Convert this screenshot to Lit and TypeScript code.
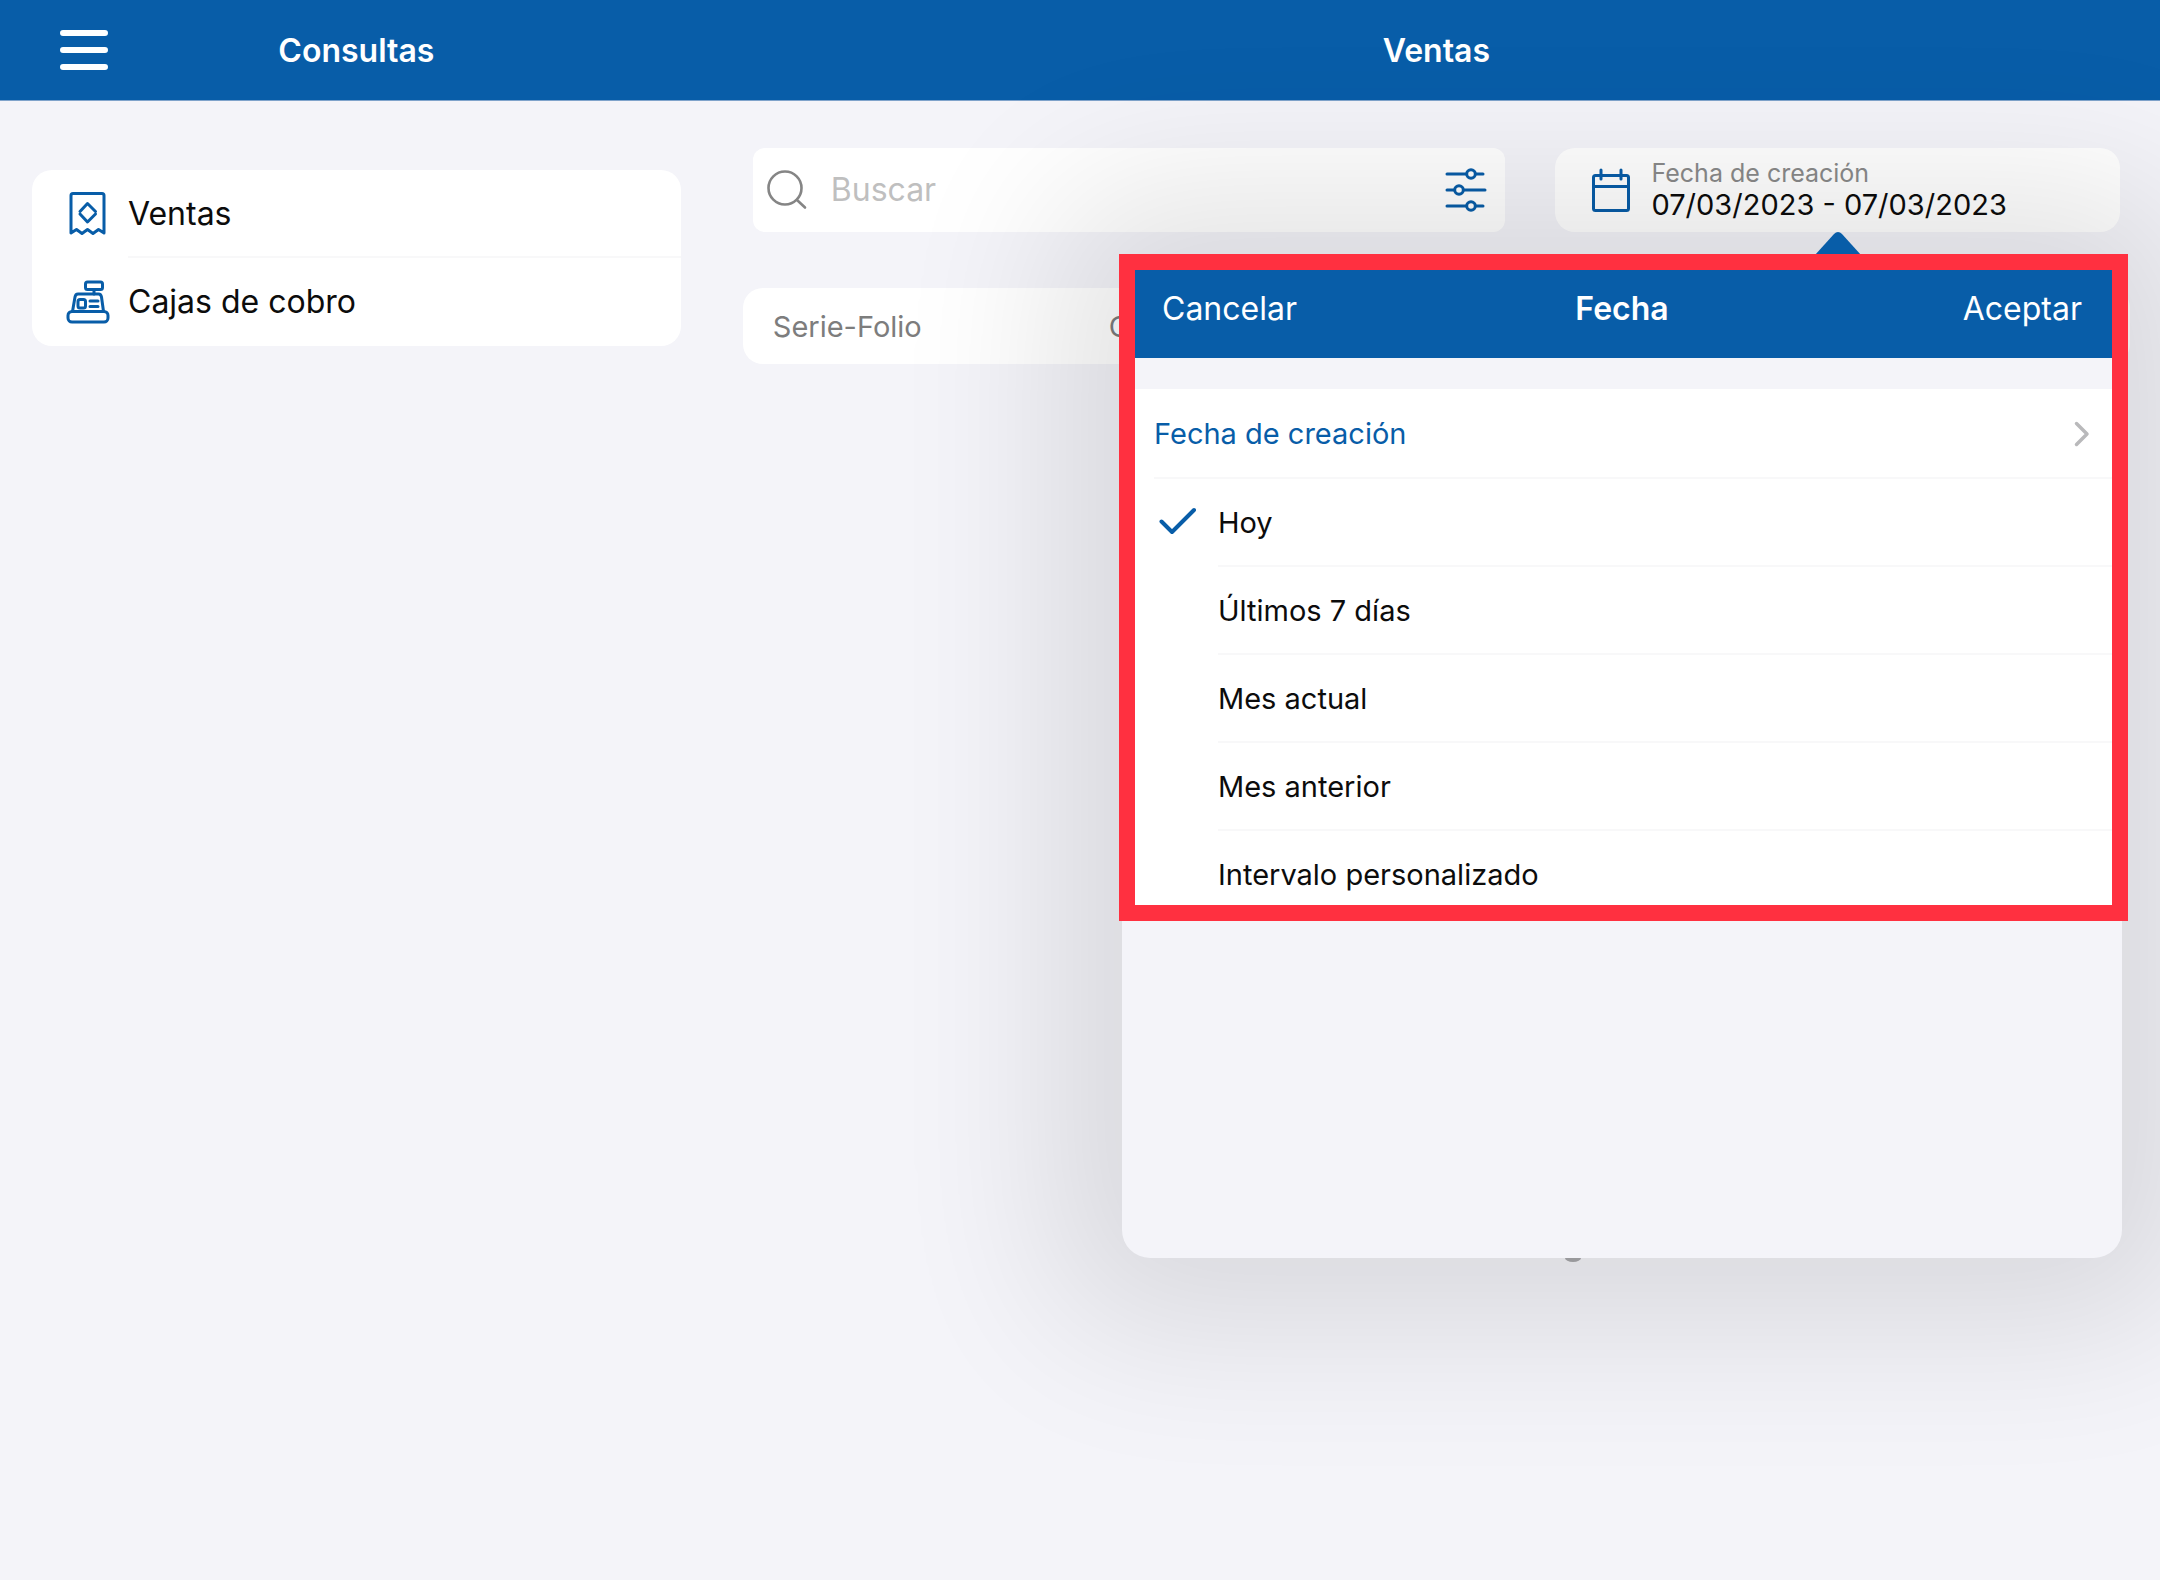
import { LitElement, html, css, svg, nothing } from "lit";
import { customElement, state } from "lit/decorators.js";

const icons = {
  menu: svg`<svg viewBox="0 0 48 40" width="48" height="40" fill="none" stroke="currentColor" stroke-width="6" stroke-linecap="round" aria-hidden="true">
    <path d="M3 3H45M3 20H45M3 37H45" /></svg>`,
  receipt: svg`<svg viewBox="0 0 44 44" width="44" height="44" fill="none" stroke="currentColor" stroke-width="3" stroke-linejoin="round" stroke-linecap="round" aria-hidden="true">
    <path d="M5 41V3.500Q5 1.500 7 1.500H36Q38 1.500 38 3.500V41L32.500 37.500L27 41.500L21.500 37.500L16 41.500L10.500 37.500Z" />
    <path d="M14 19.500L21.500 11.500L29.500 19.500" /><path d="M14 22L21.500 30L29.500 22" /></svg>`,
  register: svg`<svg viewBox="0 0 44 44" width="44" height="44" fill="none" stroke="currentColor" stroke-width="3" stroke-linejoin="round" stroke-linecap="round" aria-hidden="true">
    <rect x="19.500" y="2" width="17" height="7.500" rx="2" /><path d="M28 9.500V14" />
    <path d="M6.500 31.500L9 17Q9.500 14 12 14H32.500Q35 14 35.500 17L37.500 31.500" />
    <rect x="2" y="31.500" width="40" height="10.500" rx="4" />
    <rect x="12" y="19.500" width="7.500" height="8.500" rx="2" /><path d="M24 21H32M24 26.500H32" /></svg>`,
  search: svg`<svg viewBox="0 0 40 40" width="40" height="40" fill="none" stroke="currentColor" stroke-width="2.600" stroke-linecap="round" aria-hidden="true">
    <circle cx="18" cy="18" r="16.500" /><path d="M30 30L38 37.500" /></svg>`,
  sliders: svg`<svg viewBox="0 0 42 44" width="42" height="44" fill="none" stroke="currentColor" stroke-width="3" stroke-linecap="round" aria-hidden="true">
    <path d="M2 6H21M31 6H38M2 22H9M19 22H40M2 38H21M31 38H38" />
    <circle cx="26" cy="6" r="4.300" /><circle cx="14" cy="22" r="4.300" /><circle cx="26" cy="38" r="4.300" /></svg>`,
  calendar: svg`<svg viewBox="0 0 40 46" width="40" height="46" fill="none" stroke="currentColor" stroke-width="3" stroke-linecap="round" stroke-linejoin="round" aria-hidden="true">
    <rect x="2.500" y="8.500" width="35" height="35" rx="2" /><path d="M2.500 19.500H37.500M10 3V12M30 3V12" /></svg>`,
  check: svg`<svg viewBox="0 0 38 28" width="38" height="28" fill="none" stroke="currentColor" stroke-width="4" stroke-linecap="round" stroke-linejoin="round" aria-hidden="true">
    <path d="M2.500 14.500L13 25L35 3" /></svg>`,
  chevron: svg`<svg viewBox="0 0 16 26" width="16" height="26" fill="none" stroke="currentColor" stroke-width="3.500" stroke-linecap="round" stroke-linejoin="round" aria-hidden="true">
    <path d="M2.500 2.500L13 13L2.500 23.500" /></svg>`,
  arrow: svg`<svg viewBox="0 0 46 23" width="46" height="23" fill="currentColor" aria-hidden="true">
    <path d="M0 23L19 2Q23 -2 27 2L46 23Z" /></svg>`,
};

const ranges = ["Hoy", "Últimos 7 días", "Mes actual", "Mes anterior", "Intervalo personalizado"];

@customElement("date-popover")
export class DatePopover extends LitElement {
  @state() private selected = ranges[0];

  static styles = css`
    :host { display: block; box-sizing: border-box; border-radius: 28px; background: #f4f4f9; box-shadow: 0 0 160px 70px rgba(0, 0, 0, 0.11); }
    * { box-sizing: border-box; }
    button { font: inherit; border: 0; margin: 0; background: none; cursor: pointer; }
    .arrow { position: absolute; right: 261px; bottom: 100%; color: #085da8; display: flex; }
    .peek { position: absolute; top: 100%; left: 443px; width: 16px; height: 4px; border-radius: 0 0 50% 50% / 0 0 100% 100%; background: #99999c; }
    .sheet { position: relative; }
    .highlight { position: absolute; inset: -1px -6px -2px -3px; border: 16px solid #ff3040; pointer-events: none; }
    .bar { display: grid; grid-template-columns: 1fr auto 1fr; align-items: center; padding: 4px 40px 0; height: 103px; border-radius: 28px 28px 0 0; background: #085da8; color: #fff; font-size: 32px; line-height: 40px; }
    .bar button { color: inherit; padding: 0; justify-self: start; }
    .bar button:last-child { justify-self: end; }
    .bar h2 { margin: 0; font-size: inherit; font-weight: 600; }
    .list { margin-top: 31px; background: #fff; font-size: 29px; line-height: 40px; }
    .field { display: flex; align-items: center; justify-content: space-between; width: 100%; height: 90px; padding: 0 32px; color: #085da8; text-align: left; }
    .field svg { color: #b9b9bb; }
    fieldset { border: 0; margin: 0; padding: 0; min-width: 0; }
    .option { display: grid; grid-template-columns: 64px 1fr; align-items: center; height: 88px; padding-left: 32px; cursor: pointer; color: #0c0c0c; }
    .option span { display: flex; align-items: center; height: 100%; padding-top: 2px; border-bottom: 2px solid #f8f8f9; }
    .tick { display: grid; place-items: center start; padding: 0 0 4px 5px; color: #085da8; }
    .tick > * { grid-area: 1 / 1; }
    .tick input { appearance: none; margin: 0; width: 38px; height: 38px; }
    .rule { margin: -2px 0 0 32px; height: 2px; background: #f8f8f9; }
    .rest { height: 339px; }
  `;

  render() {
    return html`
      <div class="arrow">${icons.arrow}</div>
      <div class="sheet">
        <header class="bar">
          <button type="button">Cancelar</button>
          <h2>Fecha</h2>
          <button type="button">Aceptar</button>
        </header>
        <div class="list">
          <button class="field" type="button">Fecha de creación ${icons.chevron}</button>
          <div class="rule"></div>
          <fieldset aria-label="Fecha">
            ${ranges.map((name) => html`
              <label class="option">
                <div class="tick">
                  <input type="radio" name="range" .checked=${this.selected === name} @change=${() => (this.selected = name)} />
                  ${this.selected === name ? icons.check : nothing}
                </div>
                <span>${name}</span>
              </label>`)}
          </fieldset>
        </div>
        <div class="highlight"></div>
      </div>
      <div class="rest"></div>
      <div class="peek"></div>
    `;
  }
}

@customElement("app-root")
export class AppRoot extends LitElement {
  static styles = css`
    :host { display: flex; flex-direction: column; min-height: 100vh; overflow: hidden; background: #f4f4f9; color: #0c0c0c; font-family: Inter, "Liberation Sans", sans-serif; font-size: 32px; line-height: 40px; }
    * { box-sizing: border-box; }
    button { font: inherit; border: 0; margin: 0; padding: 0; background: none; cursor: pointer; }
    .top, .body { display: grid; grid-template-columns: 33fr 67fr; }
    .top { height: 101px; background: #085da8; border-bottom: 1px solid #7fa3cb; color: #fff; }
    .title { display: grid; grid-template-columns: 1fr auto 1fr; align-items: center; }
    .title h1 { grid-column: 2; margin: 0; padding-top: 2px; font-size: 32px; font-weight: 600; }
    .menu { justify-self: start; display: flex; margin-left: 60px; color: #fff; }
    .body { flex: 1; }
    .side { padding: 69px 32px; }
    .nav { display: flex; flex-direction: column; border-radius: 20px; background: #fff; }
    .nav a { display: flex; align-items: center; height: 88px; padding-left: 34px; gap: 18px; color: #0c0c0c; text-decoration: none; }
    .nav svg { color: #085da8; }
    .nav span { display: flex; flex: 1; align-items: center; height: 100%; padding-top: 2px; border-bottom: 2px solid #f8f8f9; }
    .nav a:last-child span { border-bottom-color: transparent; }
    .main { padding: 47px 30px; }
    .tools { display: grid; grid-template-columns: 4fr 3fr; gap: 50px; padding: 0 10px; }
    .search { min-width: 0; display: flex; align-items: center; height: 84px; padding: 0 18px 0 14px; border-radius: 12px; background: #fff; color: #858585; }
    .search input { flex: 1; min-width: 0; border: 0; outline: 0; margin: 0; padding: 0 0 0 24px; background: none; font: inherit; color: #0c0c0c; }
    .search input::placeholder { color: #bfbfbf; opacity: 1; }
    .search svg, .date svg { flex: none; }
    .filters { display: flex; color: #085da8; }
    .date-wrap { position: relative; min-width: 0; }
    .date { display: flex; align-items: center; gap: 20px; width: 100%; height: 84px; padding: 0 36px; border-radius: 20px; background: #fff; color: #085da8; text-align: left; }
    .value { display: flex; flex-direction: column; font-size: 29px; line-height: 34px; color: #0c0c0c; }
    .value small { font-size: 25px; line-height: 30px; color: #8a8a8a; }
    .sales { width: 100%; margin-top: 56px; border-collapse: separate; border-spacing: 0; table-layout: fixed; background: #fff; border-radius: 20px; }
    .sales th { height: 76px; padding: 2px 0 0 30px; font-size: 29px; font-weight: 400; text-align: left; color: #7d7d7d; }
    .sales .folio { width: 336px; }
    .popover { position: absolute; z-index: 1; top: 107px; right: -2px; width: 1000px; }
  `;

  render() {
    return html`
      <header class="top">
        <div class="title">
          <button class="menu" type="button" aria-label="Menú">${icons.menu}</button>
          <h1>Consultas</h1>
        </div>
        <div class="title"><h1>Ventas</h1></div>
      </header>
      <div class="body">
        <aside class="side">
          <nav class="nav">
            <a href="#ventas">${icons.receipt}<span>Ventas</span></a>
            <a href="#cajas">${icons.register}<span>Cajas de cobro</span></a>
          </nav>
        </aside>
        <main class="main">
          <div class="tools">
            <div class="search">
              ${icons.search}
              <input type="search" placeholder="Buscar" aria-label="Buscar" />
              <button class="filters" type="button" aria-label="Filtros">${icons.sliders}</button>
            </div>
            <div class="date-wrap">
              <button class="date" type="button">
                ${icons.calendar}
                <span class="value"><small>Fecha de creación</small>07/03/2023 - 07/03/2023</span>
              </button>
              <date-popover class="popover"></date-popover>
            </div>
          </div>
          <table class="sales">
            <thead><tr><th class="folio" scope="col">Serie-Folio</th><th scope="col">C</th></tr></thead>
          </table>
        </main>
      </div>
    `;
  }
}
